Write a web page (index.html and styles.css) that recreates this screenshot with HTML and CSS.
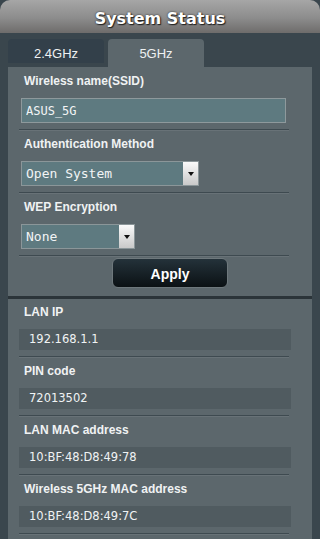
FILE: index.html
```html
<!DOCTYPE html>
<html lang="en">
<head>
  <meta charset="UTF-8" />
  <title>System Status</title>
  <link rel="stylesheet" href="styles.css">
</head>
<body>
  <div class="status-header">System Status</div>

  <div class="band-tabs">
    <div class="band-tab">2.4GHz</div>
    <div class="band-tab active">5GHz</div>
  </div>

  <div class="status-panel">
    <div class="field">
      <div class="field-label">Wireless name(SSID)</div>
      <input class="text-input" type="text" value="ASUS_5G" />
    </div>
    <div class="sep"></div>

    <div class="field">
      <div class="field-label">Authentication Method</div>
      <div class="fake-select wide">
        <span class="select-text">Open System</span>
        <span class="select-arrow"></span>
      </div>
    </div>
    <div class="sep"></div>

    <div class="field">
      <div class="field-label">WEP Encryption</div>
      <div class="fake-select narrow">
        <span class="select-text">None</span>
        <span class="select-arrow"></span>
      </div>
    </div>
    <div class="sep"></div>

    <button class="apply-btn">Apply</button>
    <div class="thick-line"></div>

    <div class="info first">
      <div class="field-label">LAN IP</div>
      <div class="info-value">192.168.1.1</div>
    </div>
    <div class="sep"></div>

    <div class="info">
      <div class="field-label">PIN code</div>
      <div class="info-value">72013502</div>
    </div>
    <div class="sep"></div>

    <div class="info">
      <div class="field-label">LAN MAC address</div>
      <div class="info-value">10:BF:48:D8:49:78</div>
    </div>
    <div class="sep"></div>

    <div class="info">
      <div class="field-label">Wireless 5GHz MAC address</div>
      <div class="info-value">10:BF:48:D8:49:7C</div>
    </div>
    <div class="sep"></div>
  </div>
</body>
</html>
```

FILE: styles.css
```css
body {
  margin: 0;
  width: 320px;
  height: 539px;
  overflow: hidden;
  background-color: #3a464d;
  font-family: 'Liberation Sans', Arial, sans-serif;
  color: #eef0f1;
}
.status-header {
  height: 28px;
  padding-top: 5px;
  line-height: 28px;
  text-align: center;
  border-radius: 10px 10px 0 0;
  background: linear-gradient(#a6a6a6, #8c8c8c 55%, #6e6c6b);
  font-family: 'DejaVu Sans', Verdana, sans-serif;
  font-weight: bold;
  font-size: 16px;
  color: #ffffff;
  text-shadow: 0 0 2px #222, 1px 1px 1px #222;
}
.band-tabs {
  display: flex;
  align-items: flex-start;
  gap: 4px;
  margin-top: 6px;
  padding-left: 8px;
}
.band-tab {
  width: 96px;
  height: 16px;
  padding-top: 8px;
  line-height: 14px;
  text-align: center;
  font-size: 13px;
  color: #eef1f2;
  background-color: #33404a;
  border-radius: 4px 4px 0 0;
}
.band-tab.active {
  height: 20px;
  background-color: #5c676c;
}
.status-panel {
  margin: 0 8px;
  height: 472px;
  background-color: #5c676c;
}
.field,
.info {
  padding-top: 7px;
}
.info.first {
  padding-top: 6px;
}
.field-label {
  padding-left: 16px;
  line-height: 14px;
  font-size: 12px;
  font-weight: bold;
  color: #f0f2f3;
}
.text-input {
  display: block;
  box-sizing: border-box;
  margin: 10px 0 6px 13px;
  width: 265px;
  height: 25px;
  padding: 0 4px;
  border: 1px solid #8e999c;
  background-color: #5e7a80;
  font-family: 'DejaVu Sans Mono', monospace;
  font-size: 12px;
  color: #f2f4f5;
  outline: none;
}
.fake-select {
  display: flex;
  align-items: center;
  box-sizing: border-box;
  margin: 10px 0 6px 13px;
  height: 25px;
  border: 1px solid #8b9699;
  background-color: #5e7a80;
}
.fake-select.wide {
  width: 178px;
}
.fake-select.narrow {
  width: 114px;
}
.select-text {
  flex: 1;
  padding-left: 4px;
  font-family: 'DejaVu Sans Mono', monospace;
  font-size: 13px;
  color: #f2f4f5;
}
.select-arrow {
  display: flex;
  align-items: center;
  justify-content: center;
  width: 15px;
  height: 23px;
  background: linear-gradient(#fafafa, #c9c9c9);
}
.select-arrow::after {
  content: '';
  margin-top: 1px;
  border-left: 3px solid transparent;
  border-right: 3px solid transparent;
  border-top: 4px solid #111;
}
.sep {
  margin: 0 23px 0 11px;
  height: 1px;
  background-color: #3e4a50;
  box-shadow: 0 1px 0 rgba(255, 255, 255, 0.08);
}
.apply-btn {
  display: block;
  margin: 2px 0 0 104px;
  width: 116px;
  height: 30px;
  padding-top: 3px;
  border: 1px solid #6e787c;
  border-radius: 6px;
  background: linear-gradient(#24323a, #0b1114);
  color: #ffffff;
  font-family: 'Liberation Sans', Arial, sans-serif;
  font-weight: bold;
  font-size: 14px;
}
.thick-line {
  margin-top: 8px;
  height: 3px;
  background-color: #2b3439;
}
.info-value {
  margin: 10px 0 6px 11px;
  width: 262px;
  height: 21px;
  padding-left: 10px;
  line-height: 21px;
  background-color: #505b60;
  font-family: 'DejaVu Sans', Verdana, sans-serif;
  font-size: 11.5px;
  color: #f0f3f4;
}
```
